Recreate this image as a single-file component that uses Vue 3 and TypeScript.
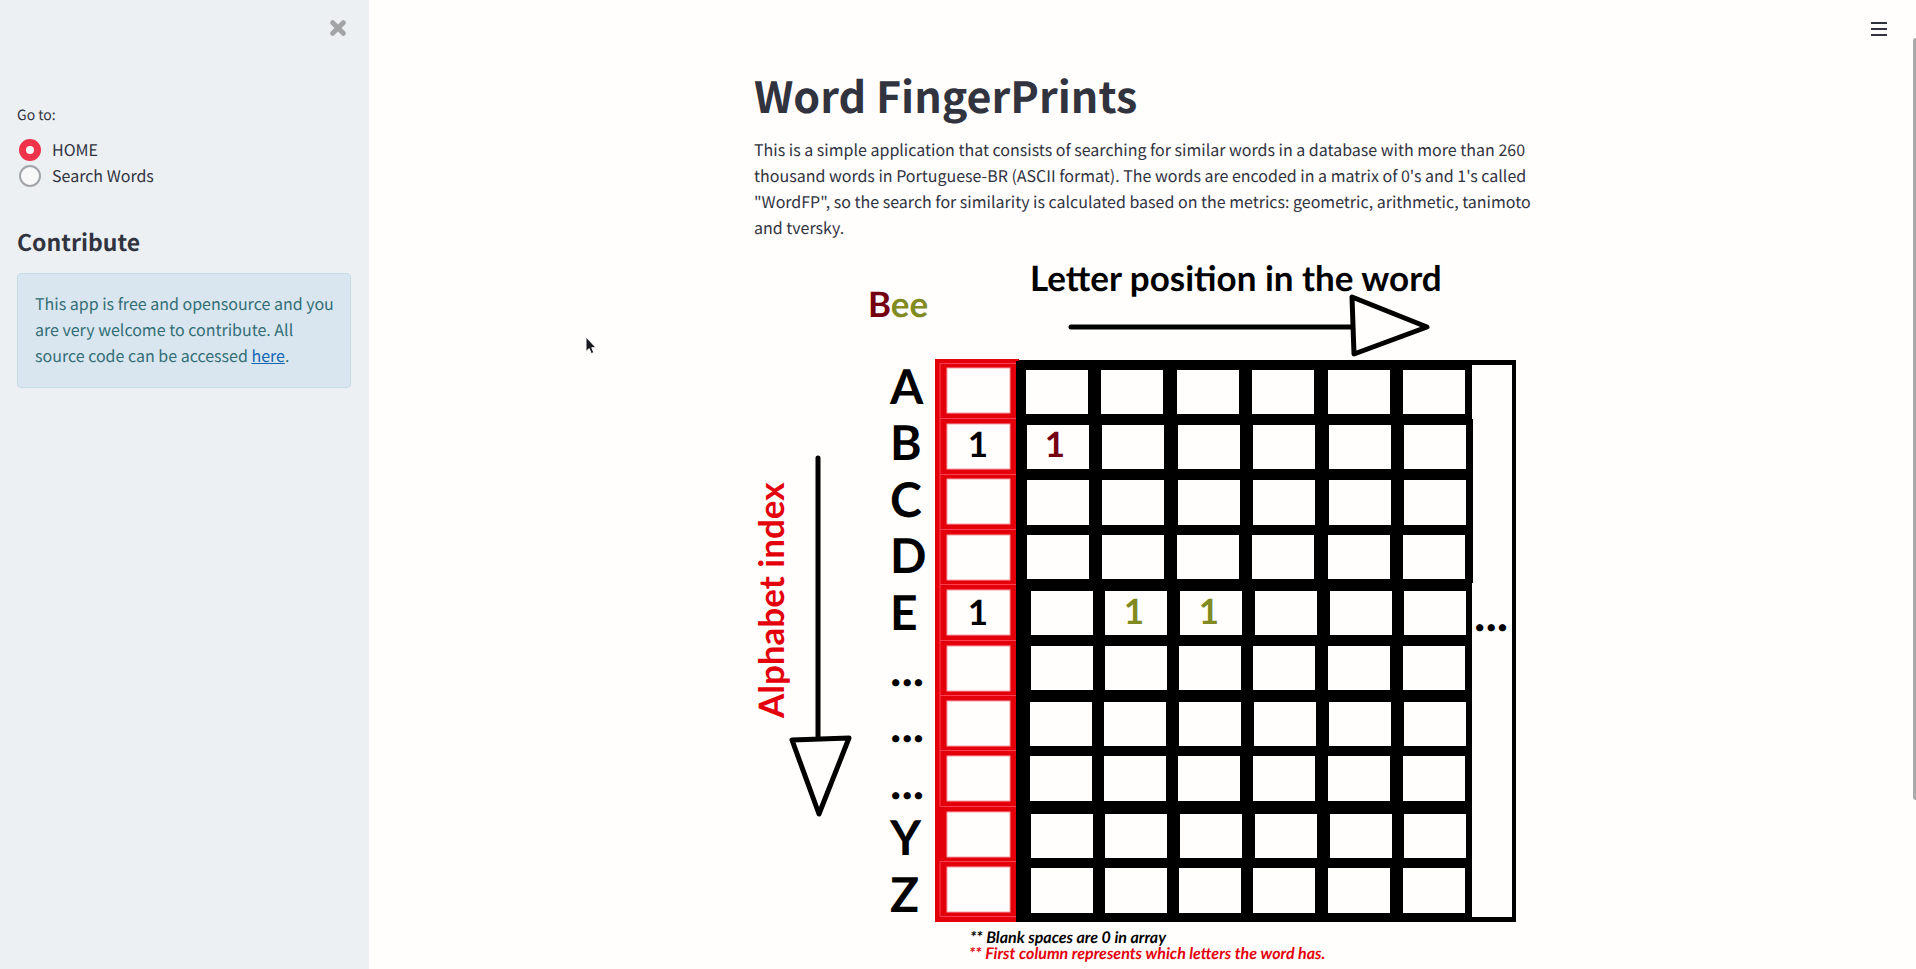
<script setup lang="ts">
import { ref } from 'vue'

interface GridRow {
  top: number
  height: number
  lefts: number[]
}

interface Mark {
  x: number
  y: number
  tone: string
}

const page = ref<string>('HOME')
const pages: string[] = ['HOME', 'Search Words']

const rows: GridRow[] = [
  { top: 112, height: 44, lefts: [272, 347, 423, 498, 574, 649] },
  { top: 167, height: 44, lefts: [273, 348, 424, 499, 575, 650] },
  { top: 222, height: 45, lefts: [273, 348, 424, 499, 575, 650] },
  { top: 277, height: 44, lefts: [273, 348, 423, 498, 574, 649] },
  { top: 333, height: 44, lefts: [277, 351, 426, 501, 576, 650] },
  { top: 388, height: 44, lefts: [277, 351, 425, 499, 574, 649] },
  { top: 444, height: 44, lefts: [276, 350, 425, 500, 575, 650] },
  { top: 498, height: 45, lefts: [276, 350, 424, 499, 574, 649] },
  { top: 556, height: 44, lefts: [277, 351, 426, 501, 576, 650] },
  { top: 610, height: 45, lefts: [277, 351, 425, 499, 574, 649] },
]

const indexTops: number[] = [110, 166, 221, 277, 332, 388, 443, 498, 554, 609]
const seams: number[] = [105, 160, 216, 271, 326, 382, 437, 492, 548, 603, 658]
const letters: string[] = ['A', 'B', 'C', 'D', 'E', '...', '...', '...', 'Y', 'Z']

const marks: Mark[] = [
  { x: 224, y: 199, tone: 'ink' },
  { x: 224, y: 367, tone: 'ink' },
  { x: 301, y: 199, tone: 'wine' },
  { x: 380, y: 366, tone: 'olive' },
  { x: 455, y: 366, tone: 'olive' },
]
</script>

<template>
  <div class="app">
    <aside class="sidebar">
      <div class="sidebar-head">
        <button class="icon-button" type="button" aria-label="Close sidebar">
          <svg width="16" height="16" viewBox="0 0 16 16" aria-hidden="true">
            <path d="M2.7 2.7L13.3 13.3M13.3 2.7L2.7 13.3" stroke="#a3a4a6" stroke-width="5" stroke-linecap="round" />
          </svg>
        </button>
      </div>
      <fieldset class="nav">
        <legend>Go to:</legend>
        <label v-for="name in pages" :key="name">
          <input v-model="page" type="radio" name="page" :value="name" />
          <span>{{ name }}</span>
        </label>
      </fieldset>
      <h2>Contribute</h2>
      <div class="notice">
        This app is free and opensource and you are very welcome to contribute. All source code can be accessed
        <a href="#">here</a>.
      </div>
    </aside>

    <main class="content">
      <button class="icon-button menu" type="button" aria-label="Menu">
        <svg width="16" height="14" viewBox="0 0 16 14" aria-hidden="true">
          <path d="M0 1H16M0 7H16M0 13H16" stroke="#31333f" stroke-width="2" />
        </svg>
      </button>
      <article class="column">
        <h1>Word FingerPrints</h1>
        <p>
          This is a simple application that consists of searching for similar words in a database with more than 260
          thousand words in Portuguese-BR (ASCII format). The words are encoded in a matrix of 0's and 1's called
          "WordFP", so the search for similarity is calculated based on the metrics: geometric, arithmetic, tanimoto
          and tversky.
        </p>
        <svg class="diagram" viewBox="0 0 768 711" role="img" aria-label="Word fingerprint matrix">
          <text class="label" x="276" y="33">Letter position in the word</text>
          <text class="label" x="114" y="59"><tspan class="wine">B</tspan><tspan class="olive">ee</tspan></text>
          <text class="label red" transform="translate(30 460) rotate(-90)">Alphabet index</text>

          <g class="arrow">
            <path d="M317 69H597M598 39L600 96L673 69Z" />
            <path d="M64 200V481M38 482L95 480L65 556Z" />
          </g>

          <text
            v-for="(letter, i) in letters"
            :key="'letter' + i"
            class="letter"
            x="136"
            :y="146 + Math.round(i * 56.4)"
          >{{ letter }}</text>

          <rect x="262" y="102" width="500" height="562" />
          <rect class="blank" x="718" y="107" width="40" height="552" />
          <rect x="717" y="161" width="2" height="164" />
          <g v-for="row in rows" :key="row.top" class="blank">
            <rect v-for="left in row.lefts" :key="left" :x="left" :y="row.top" width="62" :height="row.height" />
          </g>
          <text class="letter" x="720" y="373">...</text>

          <rect class="red" x="181" y="101" width="81" height="563" />
          <rect class="red" x="181" y="101" width="84" height="2" />
          <path class="seam" d="M186 105V548M186 603V658" />
          <path v-for="y in seams" :key="'seam' + y" class="seam" :d="`M186 ${y}.5H262`" />
          <rect
            v-for="top in indexTops"
            :key="'index' + top"
            class="index-cell"
            x="193"
            :y="top"
            width="63"
            height="45"
          />

          <text v-for="(mark, i) in marks" :key="'mark' + i" class="mark" :class="mark.tone" :x="mark.x" :y="mark.y">1</text>

          <text class="note" x="216" y="685">** Blank spaces are 0 in array</text>
          <text class="note red" x="215" y="701">** First column represents which letters the word has.</text>
        </svg>
      </article>
      <div class="scroll-thumb"></div>
    </main>

    <svg class="pointer" width="14" height="20" viewBox="0 0 14 20" aria-hidden="true">
      <path d="M2 1V15.5L5.2 12.6L7.3 17.6L9.8 16.5L7.7 11.7H12Z" fill="#17171f" stroke="#fff" />
    </svg>
  </div>
</template>

<style>
body {
  margin: 0;
}
</style>

<style scoped>
.app {
  display: flex;
  height: 100vh;
  overflow: hidden;
  background: #fffefd;
  color: #31333f;
  font: 16px/26px "Noto Sans CJK SC", "Open Sans", sans-serif;
  text-rendering: geometricPrecision;
}

.sidebar {
  box-sizing: border-box;
  flex: 0 0 369px;
  padding: 0 18px 0 17px;
  background: #ecf0f3;
}

.sidebar-head {
  display: flex;
  justify-content: flex-end;
  padding: 20px 5px 0 0;
  height: 82px;
}

.icon-button {
  display: flex;
  align-items: flex-start;
  padding: 0;
  border: 0;
  background: none;
}

.sidebar-head .icon-button {
  height: 16px;
}

.nav {
  margin: 0;
  padding: 0;
  border: 0;
}

.nav legend {
  padding: 0 0 8px;
  font-size: 14px;
}

.nav label {
  display: flex;
  align-items: center;
  gap: 11px;
}

.nav input {
  appearance: none;
  box-sizing: border-box;
  width: 22px;
  height: 22px;
  margin: 2px 0 0 2px;
  border: 2px solid #a3a4aa;
  border-radius: 50%;
  background: #f8f8f8;
}

.nav input:checked {
  border: 7px solid #ee334b;
}

h2 {
  margin: 35px 0 14px;
  font-size: 23px;
  line-height: 36px;
  font-weight: 600;
}

.notice {
  padding: 16px 14px 19px 17px;
  border: 1px solid #c2dde8;
  border-radius: 4px;
  background: #d9e6ef;
  color: #336e76;
}

.notice a {
  color: #1467b3;
}

.content {
  position: relative;
  flex: 1;
  display: flex;
  justify-content: center;
  padding: 69px 9px 0 0;
}

.menu {
  position: absolute;
  top: 22px;
  right: 29px;
}

.column {
  width: 768px;
}

h1 {
  margin: 0 0 15px;
  font-size: 43px;
  line-height: 52px;
  font-weight: 700;
}

p {
  margin: 0 -12px 18px 0;
}

.diagram {
  display: block;
  width: 100%;
  overflow: visible;
  font-family: Lato, "Open Sans", sans-serif;
  font-weight: 700;
}

.label,
.mark {
  font-size: 35px;
}

.letter {
  font-size: 48px;
}

.mark {
  text-anchor: middle;
}

.note {
  font-size: 16px;
  font-style: italic;
}

.red {
  fill: #e4000b;
}

.wine {
  fill: #75000f;
}

.olive {
  fill: #828b22;
}

.blank {
  fill: #fffefd;
}

.arrow {
  fill: none;
  stroke: #000;
  stroke-width: 5;
  stroke-linecap: round;
  stroke-linejoin: round;
}

.seam {
  fill: none;
  stroke: #fb4055;
}

.index-cell {
  fill: #fffefd;
  stroke: #f8a0a8;
}

.scroll-thumb {
  position: absolute;
  top: 38px;
  right: 0;
  width: 3px;
  height: 762px;
  border-radius: 3px 0 0 3px;
  background: #a9a9a9;
}

.pointer {
  position: absolute;
  top: 336px;
  left: 584px;
}
</style>
